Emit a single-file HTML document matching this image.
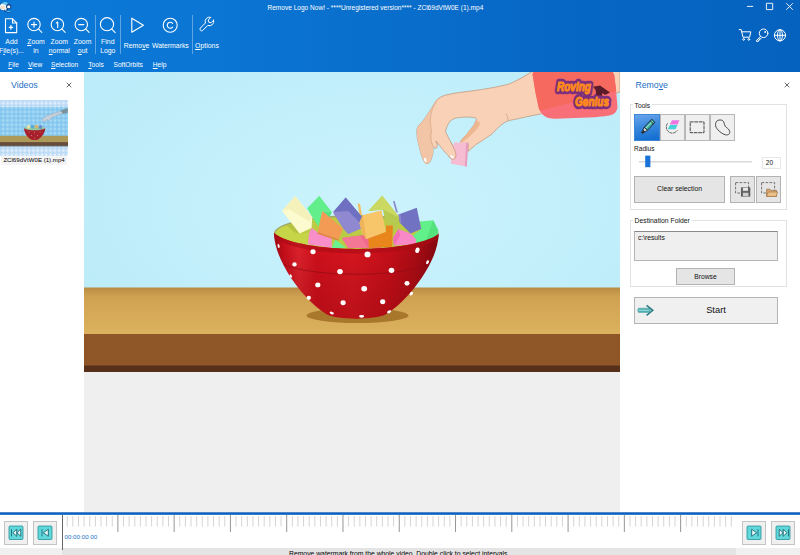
<!DOCTYPE html>
<html>
<head>
<meta charset="utf-8">
<title>Remove Logo Now!</title>
<style>
*{box-sizing:border-box;margin:0;padding:0}
html,body{width:800px;height:555px;overflow:hidden;background:#fff;font-family:"Liberation Sans",sans-serif;font-size:8px;color:#111}
.abs{position:absolute}
#app{position:relative;width:800px;height:555px;overflow:hidden;background:#fff}
#hdr{left:0;top:0;width:800px;height:72px;background:linear-gradient(90deg,#0c79d8 0%,#0b76d4 25%,#0767c5 70%,#0562bf 100%)}
.t{position:absolute;white-space:nowrap;line-height:1}
.w{color:#fff}
.tb{font-size:6.9px;text-align:center;line-height:9px;color:#fff}
.mn{font-size:6.6px;color:#fff;top:61.5px}
u{text-decoration:underline;text-underline-offset:1px;text-decoration-thickness:0.7px}
.sep{position:absolute;top:15px;width:1px;height:39px;background:rgba(255,255,255,.35)}
.btn{position:absolute;background:#e5e5e5;border:1px solid #b2b2b2}
.grp{position:absolute;border:1px solid #e2e2e2}
.lbl{position:absolute;background:#fff;padding:0 2px;font-size:8px;line-height:9px;white-space:nowrap}
</style>
</head>
<body>
<div id="app">
<!-- HEADER -->
<div id="hdr" class="abs"></div>
<div class="t w" style="left:267.5px;top:4.8px;font-size:6.55px">Remove Logo Now! - ****Unregistered version**** - ZCl69dVtW0E (1).mp4</div>


<svg class="abs" style="left:0;top:0" width="800" height="71" viewBox="0 0 800 71" fill="none" stroke="#fff" stroke-width="1.1" stroke-linecap="round" stroke-linejoin="round">
<!-- app icon -->
<g stroke="none">
<ellipse cx="4.6" cy="6.6" rx="4.8" ry="4.6" fill="#0b3f86"/>
<ellipse cx="3.6" cy="6.8" rx="3.8" ry="3.6" fill="#eef2f4"/>
<path d="M1.5 3.6 C 3.5 1.6, 7 1.6, 8.5 3.8 L 5.5 5 Z" fill="#5ec4f2"/>
<ellipse cx="2.6" cy="7.3" rx="2.3" ry="1.6" fill="#f3dcc2"/>
<ellipse cx="8.7" cy="6.6" rx="2.7" ry="2.5" fill="#0c3c84"/>
<ellipse cx="8.7" cy="6.7" rx="1.7" ry="1.5" fill="#f2f6f8"/>
<path d="M4.5 9.5 C 6 11, 8.5 11.5, 10.5 11 L 10.5 12.6 C 8 13, 5.5 12.4, 4 10.8 Z" fill="#0b3f86"/>
<path d="M5.5 10.6 C 7 11.5, 8.5 11.8, 10 11.7" stroke="#62c6f4" stroke-width="1" fill="none"/>
</g>
<!-- add file -->
<path d="M5.5 18.8h7l4.2 4.2v9.6h-11.2z"/><path d="M12.5 18.8v4.2h4.2"/><path d="M10.9 25.6v3.4M9.2 27.3h3.4" stroke-width="1.3"/>
<!-- zoom in -->
<circle cx="34" cy="24.6" r="6.2"/><path d="M38.6 29.2l3.2 3.2"/><path d="M34 22v5.2M31.4 24.6h5.2"/>
<!-- zoom normal -->
<circle cx="57.4" cy="24.6" r="6.2"/><path d="M62 29.2l3.2 3.2"/><path d="M56.3 23l1.4-1v5.4"/>
<!-- zoom out -->
<circle cx="81.3" cy="24.6" r="6.2"/><path d="M85.9 29.2l3.2 3.2"/><path d="M78.7 24.6h5.2"/>
<!-- find logo -->
<circle cx="107" cy="24.2" r="6.6"/><path d="M111.8 29.2l3.4 3.4"/>
<!-- remove (play) -->
<path d="M131.8 18.2v14l11.6-7z"/>
<!-- watermarks (c) -->
<circle cx="170.2" cy="25.2" r="7"/><path d="M172.6 23.3a3 3 0 1 0 0 3.8"/>
<!-- options wrench -->
<path d="M213.6 20.2l-2.6 2.6-2.2-.6-.6-2.2 2.6-2.6a4.3 4.3 0 0 0-5.4 5.6l-5 5a1.7 1.7 0 0 0 2.4 2.4l5-5a4.3 4.3 0 0 0 5.8-5.2z" stroke-width="1"/>
<!-- window controls -->
<g stroke-width="0.9" stroke-linecap="butt">
<path d="M747 6.4h6.2"/><rect x="766.4" y="3.3" width="6.3" height="6.3"/><path d="M786.3 3.2l6.6 6.6M792.9 3.2l-6.6 6.6"/>
</g>
<!-- cart -->
<g stroke-width="1">
<path d="M739.2 29.6h2l1.8 7.6h6.6l1.2-5.4h-9"/><circle cx="743.6" cy="39.4" r="0.9"/><circle cx="748.8" cy="39.4" r="0.9"/>
<!-- key -->
<circle cx="763.6" cy="33.3" r="4.3"/><path d="M760.5 36.4l-4 4v1h1.8v-1.3h1.3v-1.3h1.4"/><circle cx="765" cy="32" r="0.5"/>
<!-- globe -->
<circle cx="780" cy="35.3" r="5.6"/><ellipse cx="780" cy="35.3" rx="2.5" ry="5.6"/><path d="M774.4 35.3h11.2M780 29.7v11.2"/>
</g>
</svg>
<div class="sep" style="left:95px"></div><div class="sep" style="left:120px"></div><div class="sep" style="left:192px"></div>
<div class="t tb" style="left:-18.5px;width:60px;top:37px">Add<br>F<u>i</u>le(s)...</div>
<div class="t tb" style="left:6px;width:60px;top:37px"><u>Z</u>oom<br>in</div>
<div class="t tb" style="left:29.299999999999997px;width:60px;top:37px">Zoom<br><u>n</u>ormal</div>
<div class="t tb" style="left:52.599999999999994px;width:60px;top:37px">Zoom<br><u>o</u>ut</div>
<div class="t tb" style="left:77.8px;width:60px;top:37px">Find<br>Logo</div>
<div class="t tb" style="left:106.6px;width:60px;top:41px">Remo<u>v</u>e</div>
<div class="t tb" style="left:140.4px;width:60px;top:41px">Watermarks</div>
<div class="t tb" style="left:177px;width:60px;top:41px"><u>O</u>ptions</div>
<div class="t mn" style="left:8.2px"><u>F</u>ile</div>
<div class="t mn" style="left:28px"><u>V</u>iew</div>
<div class="t mn" style="left:51px"><u>S</u>election</div>
<div class="t mn" style="left:88.3px"><u>T</u>ools</div>
<div class="t mn" style="left:113.5px">SoftOrbits</div>
<div class="t mn" style="left:152.8px"><u>H</u>elp</div>

<!-- canvas grey area -->
<div class="abs" style="left:84px;top:71px;width:536px;height:442px;background:#efefef"></div>

<svg class="abs" style="left:84px;top:71px" width="536" height="301" viewBox="84 71 536 301">
<defs>
<radialGradient id="sky" cx="0.55" cy="0.45" r="0.75"><stop offset="0" stop-color="#cbf3fd"/><stop offset="1" stop-color="#b9ebf8"/></radialGradient>
<linearGradient id="ttop" x1="0" y1="0" x2="0" y2="1"><stop offset="0" stop-color="#b98c45"/><stop offset="0.2" stop-color="#cfa252"/><stop offset="1" stop-color="#dcb25e"/></linearGradient>
<linearGradient id="bowl" x1="0" y1="0" x2="1" y2="0"><stop offset="0" stop-color="#a00812"/><stop offset="0.06" stop-color="#ca0e1a"/><stop offset="0.15" stop-color="#e2222c"/><stop offset="0.26" stop-color="#d6101c"/><stop offset="0.48" stop-color="#de1620"/><stop offset="0.7" stop-color="#cc0f1a"/><stop offset="0.86" stop-color="#b00c15"/><stop offset="1" stop-color="#86070f"/></linearGradient>
<linearGradient id="bowlv" x1="0" y1="0" x2="0" y2="1"><stop offset="0" stop-color="#000" stop-opacity="0"/><stop offset="1" stop-color="#400" stop-opacity="0.22"/></linearGradient>
<clipPath id="inb"><ellipse cx="356.3" cy="234.3" rx="81.4" ry="17.8"/></clipPath>
</defs>
<rect x="84" y="71" width="536" height="301" fill="url(#sky)"/>
<rect x="84" y="287.5" width="536" height="47" fill="url(#ttop)"/>
<rect x="84" y="334" width="536" height="32" fill="#8f5628"/>
<rect x="84" y="365.5" width="536" height="7" fill="#57301a"/>
<ellipse cx="357.5" cy="315.5" rx="51" ry="7.5" fill="#a8772c"/>
<!-- bowl interior back -->
<ellipse cx="356.3" cy="233.5" rx="82.4" ry="18.5" fill="#9fa86a"/>
<ellipse cx="356.3" cy="234.3" rx="81" ry="17.6" fill="#bccb44"/>
<polygon points="307.2,208.3 319.2,195.7 331.8,212.1 322.3,211.5 318.5,226.6 312.2,217.2" fill="#62ee8a"/>
<polygon points="322.3,211.5 331.8,212.1 329.3,217.8 320.4,222.8" fill="#58e080"/>
<polygon points="368.3,210.9 382.2,195.7 399.8,217.8 397.9,227.9 392.9,232.9 386.6,225.4 382.8,209.6" fill="#b7ca50"/>
<polygon points="368.3,210.9 382.2,195.7 399.8,217.8 382.8,209.6" fill="#cbd862"/>
<polygon points="392.9,200.8 394.8,201.4 397.9,212.7 396.0,212.1" fill="#8884cc"/>
<polygon points="357.6,203.3 360.1,203.9 362.0,215.3 359.5,214.6" fill="#f4c060"/>
<g clip-path="url(#inb)"><polygon points="274.0,230.5 287.4,221.8 299.6,233.5 309.1,232.9 307.8,244.3 282.6,240.0" fill="#c6d548"/>
<polygon points="284.4,223.8 290.2,220.6 299.6,233.5 295.2,232.7" fill="#b4c23e"/></g>
<polygon points="413.1,235.4 421.2,229.1 420.0,221.6 433.2,220.3 438.3,230.4 437.0,235.4 425.7,241.7 415.6,244.3" fill="#62f08a"/>
<polygon points="433.2,220.3 438.3,230.4 437.0,235.4 425.7,241.7 426.9,238.0" fill="#56e07e"/>
<polygon points="333.1,212.7 345.7,197.6 360.0,214.6 369.6,226.6 367.1,230.4 360.0,229.1 348.2,234.2 343.1,228.5" fill="#9089d2"/>
<polygon points="333.1,212.1 345.7,197.6 360.0,214.6 372.1,230.4 369.6,234.2 360.0,222.8 348.2,210.9" fill="#7070c2"/>
<polygon points="398.5,214.6 416.8,207.7 421.2,229.1 410.5,233.5 399.8,222.8" fill="#7272c2"/>
<polygon points="398.5,214.6 400.4,214.3 401.7,222.8 399.8,222.8" fill="#8a86d0"/>
<polygon points="282.0,210.9 295.2,196.1 312.2,217.2 311.6,227.9 299.6,233.5" fill="#fcfbd0"/>
<polygon points="282.0,210.9 295.2,196.1 312.2,217.2 309.1,221.6 288.9,209.0" fill="#f5f1ba"/>
<polygon points="311.6,227.9 317.9,232.3 331.8,236.7 331.8,248.1 307.8,244.3 309.1,232.9" fill="#f88fc8"/>
<polygon points="341.9,238.0 360.0,235.4 374.7,232.9 381.0,240.5 381.6,248.1 348.2,248.1" fill="#f06a8a"/>
<polygon points="341.9,238.0 360.0,235.4 368.4,248.1 348.2,248.1" fill="#f47896"/>
<polygon points="335.6,239.2 345.7,248.1 331.8,248.1" fill="#6cf090"/>
<polygon points="322.3,210.9 343.1,228.5 338.7,239.2 317.9,232.3" fill="#f39b54"/>
<polygon points="317.9,232.3 338.7,239.2 338.1,240.7 317.4,233.7" fill="#de8540"/>
<polygon points="392.9,238.0 398.5,229.1 410.5,233.5 416.2,239.2 415.6,244.3 394.1,245.5" fill="#f888c8"/>
<polygon points="392.9,238.0 398.5,229.1 400.4,235.4 394.1,245.5" fill="#f070b8"/>
<polygon points="368.3,238.6 385.9,231.7 385.9,225.4 392.9,225.4 392.2,246.8 368.9,248.1" fill="#e8861c"/>
<polygon points="359.5,222.8 362.6,215.3 381.5,210.2 385.9,231.7 366.4,239.2 362.0,232.9" fill="#f7c66a"/>
<polygon points="359.5,222.8 362.6,215.3 363.9,222.8 366.4,239.2 362.0,232.9" fill="#f0b458"/>
<!-- bowl body -->
<path d="M273.9 233 C 300 254, 412 254, 438.7 234 C 438 249, 431.5 263, 421.9 277.4 C 412.6 291, 400.6 305, 385.6 314.5 C 374 320, 338 320, 327 314.5 C 312 305, 300 291, 290.7 277.4 C 281 262, 274.5 248, 273.9 233 Z" fill="url(#bowl)"/>
<path d="M273.9 233 C 300 254, 412 254, 438.7 234 C 438 249, 431.5 263, 421.9 277.4 C 412.6 291, 400.6 305, 385.6 314.5 C 374 320, 338 320, 327 314.5 C 312 305, 300 291, 290.7 277.4 C 281 262, 274.5 248, 273.9 233 Z" fill="url(#bowlv)"/>
<path d="M273.9 233 C 300 254, 412 254, 438.7 234 L 438.3 238.5 C 412 258.5, 300 258.5, 274.3 237.5 Z" fill="#a80c16" opacity="0.6"/>
<path d="M283.8 264.6 C 315 277.5, 397 277.5, 428.8 264.6" stroke="#8e0a12" stroke-width="0.9" fill="none" opacity="0.75"/>
<g fill="#fff"><ellipse cx="313" cy="251.8" rx="2.6" ry="2.47"/><ellipse cx="367.5" cy="254.4" rx="3" ry="2.85"/><ellipse cx="417.4" cy="250.2" rx="2.1" ry="2.8" transform="rotate(15 417.4 250.2)"/><ellipse cx="294.5" cy="264.4" rx="2.2" ry="2.09"/><ellipse cx="340" cy="271.6" rx="2.8" ry="2.66"/><ellipse cx="391.5" cy="270.3" rx="2.8" ry="2.66"/><ellipse cx="427.5" cy="262.2" rx="1.3" ry="2.1" transform="rotate(25 427.5 262.2)"/><ellipse cx="317.8" cy="284.9" rx="2.6" ry="2.47"/><ellipse cx="364.2" cy="288.8" rx="2.9" ry="2.75"/><ellipse cx="407" cy="283.3" rx="2.5" ry="2.38"/><ellipse cx="308.8" cy="297.8" rx="2.2" ry="2.09"/><ellipse cx="343.1" cy="302.7" rx="2.6" ry="2.47"/><ellipse cx="382.7" cy="301.7" rx="2.6" ry="2.47"/><ellipse cx="411.3" cy="293.6" rx="1.5" ry="2.1" transform="rotate(40 411.3 293.6)"/><ellipse cx="331.8" cy="313.1" rx="2.2" ry="1.3" transform="rotate(20 331.8 313.1)"/><ellipse cx="361.6" cy="316.3" rx="2.6" ry="1.4"/><ellipse cx="389.2" cy="311.8" rx="2.2" ry="1.3" transform="rotate(-25 389.2 311.8)"/><ellipse cx="290.8" cy="276" rx="1" ry="1.8" transform="rotate(-30 290.8 276)"/><ellipse cx="278.6" cy="246" rx="1" ry="2" transform="rotate(-12 278.6 246)"/></g>

<!-- arm + hand -->
<path id="handp" d="M620 71 L533 71 C 522 78, 512 83, 508.4 84.2 C 498 87, 480 90, 464.9 91.8 C 455 93, 447 94.5, 443 96 C 439 97.5, 436 100, 434.5 103.4 C 431 109, 426 117, 422.3 121.8 C 419 125, 417 127, 416.9 130 C 416.5 136, 418 142, 419.2 146.3 C 420.5 152, 422 158, 424.6 162.4 C 426 164, 428 164, 429.5 162.5 C 431.5 160, 432.5 155, 433 152.4 L 433 146.3 C 434 148, 435 149, 436.5 148 C 438 146.5, 437.5 144, 435.8 141 L 439.1 144.8 C 442 149, 445 152.5, 448.3 155.5 C 450 158, 452 160, 454 159 C 456.5 158, 456.5 154, 454.4 149.4 C 452 144, 448 137, 445.5 131.5 C 446.5 127, 448 124, 450.3 121.1 C 453 118.5, 456 118, 457.9 117.7 C 462 117, 470 116.8, 474.4 117.7 C 477 118.5, 477 119.5, 476 120.4 C 475.5 122, 474.5 124, 473.7 125.3 C 471 129, 469 131, 467.5 133.5 C 464 137, 462 139, 460.6 141.1 L 461 143.5 L 468.2 143.5 L 468.2 151.4 C 470 149.5, 472 148, 474.4 145.9 C 478 143, 480 142, 482.6 140.4 C 486 138, 488 136.5, 490.9 134.9 C 494 132, 496 130, 497.8 128 C 500 126, 502 124, 504.6 122.5 C 507 121, 510 120.2, 512.9 119.8 C 518 118.8, 522 117.8, 525.3 117 L 539 114.3 L 620 92 Z" fill="#f8d1b6" stroke="#b98565" stroke-width="0.6"/>
<!-- shading -->
<path d="M439.1 98 C 436 100, 436 100, 434.5 103.4 C 431 109, 426 117, 422.3 121.8 C 419 125, 417 127, 416.9 130 C 416.5 136, 418 142, 419.2 146.3 C 420.5 152, 422 158, 424.6 162.4 C 426 164, 428 164, 429.5 162.5 C 431.5 160, 432.5 155, 433 152.4 L 433 146.3 C 431 142, 430 136, 431.5 131 C 431 128, 430 124, 430.5 118 C 431 112, 433 106, 439.1 98 Z" fill="#f2c5a7"/>

<path d="M476 120.4 C 482 121, 480 126, 476 130 C 472 134.5, 466 140, 461.5 143 L 460.6 141.1 C 464 137, 469 131, 473.7 125.3 Z" fill="#ecb791"/>
<path d="M438.4 98.4 C 433 106, 431 112, 430.5 118 C 430 124, 431 128, 431.5 131" fill="none" stroke="#d9a888" stroke-width="0.7"/>
<path d="M431.5 131 C 430 136, 431 142, 433 146.3" fill="none" stroke="#c99878" stroke-width="0.6"/>
<path d="M506 113.6 C 507.5 116, 508 118.5, 508 120.4" fill="none" stroke="#c99878" stroke-width="0.6"/>
<!-- pink cube -->
<polygon points="453.8,142.5 468.2,142.5 466.8,166.5 450.7,163.8" fill="#f6bcd2"/>
<polygon points="466.2,142.5 468.2,142.5 466.8,166.5 464.8,166.2" fill="#e59dbd"/>
<!-- index tip over cube -->
<path d="M445.5 150 C 447 153, 448 154.5, 448.3 155.5 C 450 158, 452 160, 454 159 C 456.5 158, 456.5 154, 454.4 149.4 C 453 146.5, 452 144.5, 451 142.5 Z" fill="#f8d1b6"/>
<path d="M448.3 155.5 C 450 158, 452 160, 454 159 C 456.5 158, 456.5 154, 454.4 149.4 C 453 146.5, 452 144.5, 451 142.5" fill="none" stroke="#b98565" stroke-width="0.6"/>
<ellipse cx="452" cy="156.8" rx="2" ry="1.3" transform="rotate(35 452 156.8)" fill="#fff"/>
<ellipse cx="425.3" cy="159.8" rx="1.2" ry="2.2" transform="rotate(-15 425.3 159.8)" fill="#fff"/>
<!-- red selection -->
<path d="M534 71 L611 71 C 613.5 72, 614.5 75, 614.6 78 L 616.3 93 L 617.5 106.8 C 617.3 110, 616 112.5, 613.5 114 C 611 115.5, 606 116.2, 595 117.2 L 575 118 L 556.3 118.8 C 550 118.8, 546 117.5, 543.8 115.5 C 541 113, 539.5 110.5, 538.8 108 L 535.6 93 L 532.5 74 Z" fill="#f86f78"/>
<path d="M534 71 L611 71 C 613.5 72, 614.5 75, 614.6 78 L 616.3 91.3 L 540 110.5 L 538.8 108 L 535.6 93 L 532.5 74 Z" fill="#f5695e"/>
<!-- watermark -->
<g font-family="'Liberation Sans',sans-serif" font-weight="bold" font-style="italic" font-size="13" stroke-linejoin="round">
<text x="557" y="90.5" textLength="34" lengthAdjust="spacingAndGlyphs" fill="#7b2f7c" stroke="#7b2f7c" stroke-width="6.5">Roving</text>
<text x="575" y="106" textLength="34" lengthAdjust="spacingAndGlyphs" fill="#7b2f7c" stroke="#7b2f7c" stroke-width="6.5">Genius</text>
<polygon points="593.1,86.8 600,85.5 610,92.4 605,94.9 602.5,93 601.9,96.1 596.3,94.9 595.6,89.9" fill="#5a1b2b" stroke="none"/>
<text x="557" y="90.5" textLength="34" lengthAdjust="spacingAndGlyphs" fill="#ff8a1c" stroke="#ff8a1c" stroke-width="1.1">Roving</text>
<text x="575" y="106" textLength="34" lengthAdjust="spacingAndGlyphs" fill="#ff8a1c" stroke="#ff8a1c" stroke-width="1.1">Genius</text>
</g>

</svg>


<!-- LEFT PANEL -->
<div class="abs" style="left:0;top:71px;width:84px;height:442px;background:#fff"></div>
<div class="t" style="left:11px;top:80.5px;font-size:8.8px;color:#1a6fc4">Videos</div>
<svg class="abs" style="left:66px;top:82px" width="6" height="6" viewBox="0 0 6 6"><path d="M0.7 0.7l4.6 4.6M5.3 0.7l-4.6 4.6" stroke="#444" stroke-width="0.8"/></svg>

<svg class="abs" style="left:0;top:99.5px" width="68" height="56" viewBox="0 99.5 68 56">
<defs>
<pattern id="ck" x="0" y="99.5" width="4.3" height="4.3" patternUnits="userSpaceOnUse">
<rect width="4.3" height="4.3" fill="#e2f0fc"/><rect width="2.15" height="4.3" fill="#b4d6f4" opacity="0.65"/><rect width="4.3" height="2.15" fill="#b4d6f4" opacity="0.65"/>
</pattern>
<pattern id="ck2" x="0" y="99.5" width="4.3" height="4.3" patternUnits="userSpaceOnUse">
<rect width="4.3" height="4.3" fill="#a8dcf6"/><rect width="2.15" height="4.3" fill="#7cc0ec" opacity="0.6"/><rect width="4.3" height="2.15" fill="#7cc0ec" opacity="0.6"/>
</pattern>
</defs>
<rect x="0" y="99.5" width="68" height="56" fill="url(#ck)"/>
<rect x="0" y="106.5" width="68" height="39.2" fill="url(#ck2)"/>
<rect x="0" y="135.3" width="68" height="6.3" fill="#ad9a58"/>
<rect x="0" y="141.6" width="68" height="3.3" fill="#6b4a36"/>
<rect x="0" y="144.9" width="68" height="0.9" fill="#4a3428"/>
<path d="M42.3 119 C 44 116.5, 47 115, 50 114 C 56 112, 62 110.5, 67.6 108.6 L 67.6 111.5 C 62 113, 57 114.5, 53 116.5 C 50.5 118, 49.5 120.5, 47.5 120.2 L 46.8 118.8 L 45.5 121 L 43.8 121.3 C 42.8 121, 42.2 120, 42.3 119 Z" fill="#c4d0dc" stroke="#8f9aa8" stroke-width="0.4"/>
<path d="M60.5 110.2 L67.6 107.6 L67.6 112.5 L63 113.2 Z" fill="#6f8a92" opacity="0.85"/>
<ellipse cx="34.6" cy="128" rx="10.6" ry="2.4" fill="#8fc8a0"/>
<rect x="27" y="124.8" width="3" height="3.5" fill="#e8e4a8" transform="rotate(-30 28.5 126.5)"/>
<rect x="31" y="124.3" width="3" height="3.5" fill="#5aa8d8" transform="rotate(20 32.5 126)"/>
<rect x="35" y="124.3" width="3" height="3.5" fill="#d8b070" transform="rotate(-15 36.5 126)"/>
<rect x="39" y="124.8" width="3" height="3.5" fill="#6a8ad0" transform="rotate(25 40.5 126.5)"/>
<path d="M24 127.8 C 28 130.5, 41 130.5, 45.3 127.8 C 45 133, 41 137.5, 38 139 C 36 139.8, 33 139.8, 31 139 C 28 137.5, 24.3 133, 24 127.8 Z" fill="#a8202c"/>
<g fill="#e8c8d0"><circle cx="29" cy="131.5" r="0.45"/><circle cx="34.5" cy="132" r="0.45"/><circle cx="40" cy="131.5" r="0.45"/><circle cx="31.5" cy="135" r="0.45"/><circle cx="37.5" cy="135" r="0.45"/><circle cx="34.5" cy="137.5" r="0.45"/></g>
</svg>
<div class="abs" style="left:1px;top:156px;width:66px;height:9px;background:#f4f4f4"></div>
<div class="t" style="left:3.4px;top:157.3px;font-size:6.1px;color:#000">ZCl69dVtW0E (1).mp4</div>

<!-- RIGHT PANEL -->
<div class="abs" style="left:620px;top:71px;width:180px;height:442px;background:#fff"></div>
<div class="t" style="left:635.5px;top:80.5px;font-size:8.7px;color:#1a6fc4">Remo<u>v</u>e</div>
<svg class="abs" style="left:784px;top:82px" width="6" height="6" viewBox="0 0 6 6"><path d="M0.7 0.7l4.6 4.6M5.3 0.7l-4.6 4.6" stroke="#444" stroke-width="0.8"/></svg>

<!-- Tools group -->
<div class="grp" style="left:630px;top:104px;width:157px;height:106px"></div>
<div class="lbl" style="left:632.6px;top:100.6px;font-size:6.7px">Tools</div>
<div class="btn" style="left:634px;top:114px;width:26px;height:27px;background:linear-gradient(170deg,#68a6ea 0%,#3a88de 45%,#0f6ccf 100%);border-color:#3f86d6"></div>
<div class="btn" style="left:660px;top:114px;width:25px;height:27px;background:#efefef;border-color:#b8b8b8"></div>
<div class="btn" style="left:685px;top:114px;width:25px;height:27px;background:#efefef;border-color:#b8b8b8"></div>
<div class="btn" style="left:710px;top:114px;width:25px;height:27px;background:#efefef;border-color:#b8b8b8"></div>
<svg class="abs" style="left:620px;top:100px" width="180" height="120" viewBox="620 100 180 120" fill="none" stroke-linecap="round" stroke-linejoin="round">
<!-- marker -->
<g transform="translate(647.6 127.2) rotate(43)">
<rect x="-2" y="-8.6" width="4" height="11" fill="#3fb0a2" stroke="#1c1c1c" stroke-width="0.8"/>
<path d="M-0.6 -7.6v9" stroke="#a8ece0" stroke-width="0.9"/>
<path d="M-2 -6.4h4" stroke="#1c1c1c" stroke-width="0.7"/>
<path d="M-2 2.4h4l-0.7 3h-2.6z" fill="#cfcfcf" stroke="#1c1c1c" stroke-width="0.7"/>
<path d="M-1.1 5.4h2.2l-0.5 2.8h-1.2z" fill="#2a2a2a" stroke="#1c1c1c" stroke-width="0.5"/>
</g>
<!-- eraser -->
<path d="M672 120.3h7.5l-2 4.1h-7.6z" fill="#ea74e2" stroke="none"/>
<path d="M669.9 124.9h7.6l-2.1 4.4h-7.6z" fill="#44d2d8" stroke="none"/>
<path d="M667.4 123.6a5.8 5.8 0 1 0 9.8 7" stroke="#444" stroke-width="0.8" stroke-dasharray="2.2 1.3"/>
<!-- rect select -->
<rect x="690.2" y="121.9" width="13.8" height="10.8" stroke="#333" stroke-width="0.9" stroke-dasharray="3 1.5"/>
<!-- lasso -->
<path d="M718 120.3 C 720.5 119.5, 723 120, 723.8 122.2 C 724.6 124.5, 724.6 126, 726.2 127.3 C 728 128.6, 729.8 130, 729.8 132.2 C 729.8 134.5, 727.6 135.3, 725.4 134.8 C 722.5 134, 719 131.5, 716.8 128.5 C 715 126, 714.8 122, 718 120.3 Z" stroke="#333" stroke-width="0.9" stroke-dasharray="4 0.8"/>
<!-- slider -->
<path d="M639 161.8h113" stroke="#d8d8d8" stroke-width="1.6" stroke-linecap="butt"/>
<rect x="645.2" y="155.6" width="5.2" height="11.6" fill="#1a73d8" stroke="none"/>
</svg>
<div class="t" style="left:634px;top:146.3px;font-size:6.6px">Radius</div>
<div class="abs" style="left:762px;top:157px;width:19px;height:12px;border:1px solid #e6e6e6;background:#fff"></div>
<div class="t" style="left:765.8px;top:159.6px;font-size:6.6px">20</div>
<div class="btn" style="left:634px;top:175.5px;width:91px;height:27px"></div>
<div class="t" style="left:634px;width:91px;text-align:center;top:186.4px;font-size:6.8px">Clear selection</div>
<div class="btn" style="left:730px;top:175.5px;width:25px;height:27px"></div>
<div class="btn" style="left:756px;top:175.5px;width:25px;height:27px"></div>
<svg class="abs" style="left:728px;top:174px" width="56" height="30" viewBox="728 174 56 30" fill="none">
<rect x="735.6" y="182.6" width="13" height="10.4" stroke="#555" stroke-width="0.8" stroke-dasharray="2.6 1.4"/>
<rect x="741.2" y="187.8" width="8.8" height="8.4" fill="#666" stroke="#444" stroke-width="0.5"/>
<rect x="743" y="187.8" width="5" height="3" fill="#e8e8e8"/><rect x="743" y="192.8" width="5.4" height="3.4" fill="#cfcfcf"/>
<rect x="761.6" y="182.6" width="13" height="10.4" stroke="#555" stroke-width="0.8" stroke-dasharray="2.6 1.4"/>
<path d="M766.6 189.2h3.4l1 1.2h5.6v6h-10z" fill="#d8a870" stroke="#8a6030" stroke-width="0.6"/>
<path d="M766.6 196.4l1.6-4.4h9.4l-1.4 4.4z" fill="#eac088" stroke="#8a6030" stroke-width="0.5"/>
</svg>
<!-- Destination group -->
<div class="grp" style="left:630px;top:220px;width:157px;height:67px"></div>
<div class="lbl" style="left:632.6px;top:216px;font-size:6.8px">Destination Folder</div>
<div class="abs" style="left:634px;top:231px;width:144px;height:30px;background:#efefef;border:1px solid #b4b4b4;border-top-color:#8a8a8a"></div>
<div class="t" style="left:638px;top:234.8px;font-size:6.7px">c:\results</div>
<div class="btn" style="left:676px;top:268px;width:59px;height:17px"></div>
<div class="t" style="left:676px;width:59px;text-align:center;top:273.5px;font-size:6.7px">Browse</div>
<!-- Start -->
<div class="btn" style="left:634px;top:297px;width:144px;height:27px;background:#f0f0f0;border-color:#b4b4b4"></div>
<div class="t" style="left:696px;width:40px;text-align:center;top:306.3px;font-size:9.3px">Start</div>
<svg class="abs" style="left:636px;top:302px" width="20" height="16" viewBox="636 302 20 16">
<path d="M638.4 308.2h10.5l1.6 2.1-1.6 2.1h-10.5l-0.8-2.1z" fill="#4fb0b2" stroke="#2f8a90" stroke-width="0.4"/><path d="M646.6 305.3l6.2 5-6.2 5" fill="none" stroke="#2a7d84" stroke-width="1.5" stroke-linejoin="miter"/>
<path d="M638.6 310.3h10.5" stroke="#b8ecec" stroke-width="0.8"/>
</svg>

<div class="abs" style="left:0;top:71px;width:800px;height:1px;background:linear-gradient(90deg,#0c79d8 0%,#0b76d4 25%,#0767c5 70%,#0562bf 100%)"></div>
<!-- TIMELINE -->
<div class="abs" style="left:0;top:513px;width:800px;height:42px;background:#fff"></div>
<div class="abs" style="left:0;top:512px;width:800px;height:3px;background:linear-gradient(180deg,#4d88cc 0,#4d88cc 1px,#0f60bc 1px,#0f60bc 2px,#2f7ccd 2px,#2f7ccd 3px)"></div>
<div class="abs" style="left:0;top:548px;width:800px;height:7px;background:#f0f0f0"></div>
<div class="abs" style="left:62px;top:548px;width:674px;height:7px;background:#e4e4e4"></div>

<svg class="abs" style="left:0;top:513px" width="800" height="42" viewBox="0 513 800 42" fill="none">
<path d="M62.5 515v35" stroke="#666" stroke-width="1"/>
<path d="M67.23 516v10.5M72.86 516v10.5M78.48 516v10.5M84.11 516v10.5M89.74 516v10.5M95.37 516v10.5M100.99 516v10.5M106.62 516v10.5M112.25 516v10.5M123.50 516v10.5M129.13 516v10.5M134.76 516v10.5M140.39 516v10.5M146.01 516v10.5M151.64 516v10.5M157.27 516v10.5M162.90 516v10.5M168.52 516v10.5M179.78 516v10.5M185.41 516v10.5M191.03 516v10.5M196.66 516v10.5M202.29 516v10.5M207.91 516v10.5M213.54 516v10.5M219.17 516v10.5M224.80 516v10.5M236.05 516v10.5M241.68 516v10.5M247.31 516v10.5M252.94 516v10.5M258.56 516v10.5M264.19 516v10.5M269.82 516v10.5M275.45 516v10.5M281.07 516v10.5M292.33 516v10.5M297.96 516v10.5M303.58 516v10.5M309.21 516v10.5M314.84 516v10.5M320.47 516v10.5M326.09 516v10.5M331.72 516v10.5M337.35 516v10.5M348.60 516v10.5M354.23 516v10.5M359.86 516v10.5M365.49 516v10.5M371.11 516v10.5M376.74 516v10.5M382.37 516v10.5M388.00 516v10.5M393.62 516v10.5M404.88 516v10.5M410.51 516v10.5M416.13 516v10.5M421.76 516v10.5M427.39 516v10.5M433.02 516v10.5M438.64 516v10.5M444.27 516v10.5M449.90 516v10.5M461.15 516v10.5M466.78 516v10.5M472.41 516v10.5M478.04 516v10.5M483.66 516v10.5M489.29 516v10.5M494.92 516v10.5M500.55 516v10.5M506.17 516v10.5M517.43 516v10.5M523.06 516v10.5M528.68 516v10.5M534.31 516v10.5M539.94 516v10.5M545.57 516v10.5M551.19 516v10.5M556.82 516v10.5M562.45 516v10.5M573.70 516v10.5M579.33 516v10.5M584.96 516v10.5M590.59 516v10.5M596.21 516v10.5M601.84 516v10.5M607.47 516v10.5M613.10 516v10.5M618.72 516v10.5M629.98 516v10.5M635.61 516v10.5M641.23 516v10.5M646.86 516v10.5M652.49 516v10.5M658.12 516v10.5M663.74 516v10.5M669.37 516v10.5M675.00 516v10.5M686.25 516v10.5M691.88 516v10.5M697.51 516v10.5M703.14 516v10.5M708.76 516v10.5M714.39 516v10.5M720.02 516v10.5M725.65 516v10.5M731.27 516v10.5" stroke="#d4d4d4" stroke-width="1"/>
<path d="M117.88 515v17M174.15 515v17M230.43 515v17M286.70 515v17M342.98 515v17M399.25 515v17M455.53 515v17M511.80 515v17M568.08 515v17M624.35 515v17M680.63 515v17" stroke="#7a7a7a" stroke-width="0.8"/>
<rect x="4.5" y="521.5" width="23" height="23" fill="#f0f0f0" stroke="#c4c4c4"/><rect x="9" y="526" width="14" height="13.5" rx="1" fill="#5fd8dc" stroke="#2a8f98" stroke-width="0.8"/>
<rect x="33.5" y="521.5" width="23" height="23" fill="#f0f0f0" stroke="#c4c4c4"/><rect x="38" y="526" width="14" height="13.5" rx="1" fill="#5fd8dc" stroke="#2a8f98" stroke-width="0.8"/>
<rect x="742.5" y="521.5" width="23" height="23" fill="#f0f0f0" stroke="#c4c4c4"/><rect x="747" y="526" width="14" height="13.5" rx="1" fill="#5fd8dc" stroke="#2a8f98" stroke-width="0.8"/>
<rect x="771.5" y="521.5" width="23" height="23" fill="#f0f0f0" stroke="#c4c4c4"/><rect x="776" y="526" width="14" height="13.5" rx="1" fill="#5fd8dc" stroke="#2a8f98" stroke-width="0.8"/>
<g stroke="#1a5a68" stroke-width="0.8" stroke-linejoin="round" stroke-linecap="round" fill="#e4f8fa">
<path d="M11.5 529.5v6.5M16.5 529.5l-3.6 3.250 3.6 3.250zM20.5 529.5l-3.6 3.250 3.6 3.250z"/>
<path d="M42 529.5v6.5M48 529.5l-4.6 3.250 4.6 3.250z"/>
<path d="M758 529.5v6.5M752 529.5l4.6 3.250-4.6 3.250z"/>
<path d="M788.5 529.5v6.5M779.5 529.5l3.6 3.250-3.6 3.250zM783.5 529.5l3.6 3.250-3.6 3.250z"/>
</g>
</svg>
<div class="t" style="left:64.5px;top:533.5px;font-size:6.2px;color:#1a6fc4">00:00:00 00</div>
<div class="t" style="left:289px;top:551.2px;font-size:6.8px;color:#000">Remove watermark from the whole video. Double click to select intervals.</div>
</div>
</body>
</html>
